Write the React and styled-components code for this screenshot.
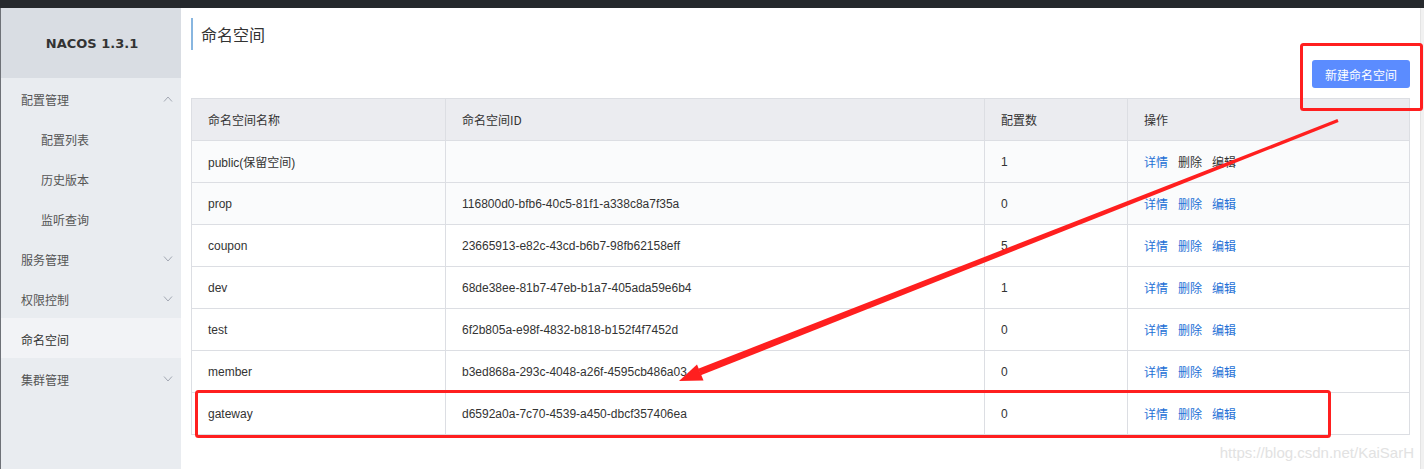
import React from 'react';
import styled, { createGlobalStyle } from 'styled-components';

const GlobalStyle = createGlobalStyle`
  html, body {
    margin: 0;
    padding: 0;
    background: #fff;
    font-family: "Liberation Sans", "Noto Sans CJK SC", sans-serif;
    color: #333;
  }
`;

const namespaces = [
  { name: 'public(保留空间)', id: '', count: 1, reserved: true },
  { name: 'prop', id: '116800d0-bfb6-40c5-81f1-a338c8a7f35a', count: 0 },
  { name: 'coupon', id: '23665913-e82c-43cd-b6b7-98fb62158eff', count: 5 },
  { name: 'dev', id: '68de38ee-81b7-47eb-b1a7-405ada59e6b4', count: 1 },
  { name: 'test', id: '6f2b805a-e98f-4832-b818-b152f4f7452d', count: 0 },
  { name: 'member', id: 'b3ed868a-293c-4048-a26f-4595cb486a03', count: 0 },
  { name: 'gateway', id: 'd6592a0a-7c70-4539-a450-dbcf357406ea', count: 0 },
];

const menu = [
  { label: '配置管理', arrow: 'up' },
  { label: '配置列表', sub: true },
  { label: '历史版本', sub: true },
  { label: '监听查询', sub: true },
  { label: '服务管理', arrow: 'down' },
  { label: '权限控制', arrow: 'down' },
  { label: '命名空间', active: true },
  { label: '集群管理', arrow: 'down' },
];

function Chevron({ dir }) {
  return (
    <svg width="10" height="6" viewBox="0 0 10 6">
      <polyline
        points={dir === 'up' ? '1,5.5 5,1 9,5.5' : '1,0.5 5,5 9,0.5'}
        fill="none"
        stroke="#a3a8b3"
        strokeWidth="1"
      />
    </svg>
  );
}

export default function App() {
  return (
    <Page>
      <GlobalStyle />
      <TopBar />
      <Body>
        <Sidebar>
          <Brand>NACOS 1.3.1</Brand>
          {menu.map((m) => (
            <MenuItem key={m.label} $sub={m.sub} $active={m.active}>
              <span>{m.label}</span>
              {m.arrow && <Chevron dir={m.arrow} />}
            </MenuItem>
          ))}
        </Sidebar>
        <Main>
          <Title>命名空间</Title>
          <Toolbar>
            <PrimaryButton>新建命名空间</PrimaryButton>
          </Toolbar>
          <Table>
            <colgroup>
              <col style={{ width: 254 }} />
              <col style={{ width: 539 }} />
              <col style={{ width: 143 }} />
              <col style={{ width: 282 }} />
            </colgroup>
            <thead>
              <tr>
                <Th>命名空间名称</Th>
                <Th>命名空间ID</Th>
                <Th>配置数</Th>
                <Th>操作</Th>
              </tr>
            </thead>
            <tbody>
              {namespaces.map((ns, i) => (
                <Row key={ns.name} $tinted={i < 2}>
                  <Td>{ns.name}</Td>
                  <Td>{ns.id}</Td>
                  <Td>{ns.count}</Td>
                  <Td>
                    <Actions>
                      <ActionLink>详情</ActionLink>
                      <ActionLink $disabled={ns.reserved}>删除</ActionLink>
                      <ActionLink $disabled={ns.reserved}>编辑</ActionLink>
                    </Actions>
                  </Td>
                </Row>
              ))}
            </tbody>
          </Table>
        </Main>
        <ScrollStrip />
      </Body>

      <Annotations width="1424" height="469" viewBox="0 0 1424 469">
        <rect x="1301.5" y="44.5" width="120" height="65" rx="2" fill="none" stroke="#ff1f1f" strokeWidth="3" />
        <rect x="196.5" y="391.5" width="1133" height="45" rx="2" fill="none" stroke="#ff1f1f" strokeWidth="3" />
        <polygon points="1337.4,119.1 1338.6,121.9 700.8,375.3 698.2,368.7" fill="#ff1f1f" />
        <polygon points="679,381 697,364.5 703.5,380.5" fill="#ff1f1f" />
      </Annotations>
      <Watermark>https://blog.csdn.net/KaiSarH</Watermark>
    </Page>
  );
}

const Page = styled.div`
  position: relative;
  width: 1424px;
  height: 469px;
  overflow: hidden;
`;

const TopBar = styled.div`
  height: 8px;
  background: #25282c;
`;

const Body = styled.div`
  display: flex;
  height: 461px;
`;

const Sidebar = styled.nav`
  width: 180px;
  flex-shrink: 0;
  background: #e9ecf0;
  border-left: 1px solid #6e7177;
`;

const Brand = styled.div`
  height: 70px;
  display: flex;
  align-items: center;
  justify-content: center;
  background: #d9dde3;
  font-family: "DejaVu Sans", "Liberation Sans", sans-serif;
  font-weight: bold;
  font-size: 13px;
  color: #333;
  padding-left: 2px;
`;

const MenuItem = styled.div`
  height: 40px;
  display: flex;
  align-items: center;
  justify-content: space-between;
  padding: 2px 8px 0 ${(p) => (p.$sub ? 40 : 20)}px;
  box-sizing: border-box;
  font-size: 12px;
  color: ${(p) => (p.$active ? '#333' : '#555')};
  background: ${(p) => (p.$active ? '#f2f3f6' : 'transparent')};
  font-family: "Noto Sans CJK SC", sans-serif;
`;

const Main = styled.main`
  flex: 1;
  padding: 10px 10px 0 10px;
  display: flex;
  flex-direction: column;
`;

const Title = styled.h1`
  margin: 0;
  height: 32px;
  display: flex;
  align-items: center;
  border-left: 2px solid #88b6e0;
  padding-left: 8px;
  font-size: 16px;
  font-weight: normal;
  color: #333;
  font-family: "Noto Sans CJK SC", sans-serif;
`;

const Toolbar = styled.div`
  display: flex;
  justify-content: flex-end;
  margin-top: 10px;
`;

const PrimaryButton = styled.button`
  height: 28px;
  width: 98px;
  border: none;
  border-radius: 3px;
  background: #5b8cff;
  color: #fff;
  font-size: 12px;
  font-family: "Noto Sans CJK SC", sans-serif;
  padding: 0;
  cursor: pointer;
`;

const Table = styled.table`
  margin: 10px 0 0 0;
  width: 1218px;
  border-collapse: collapse;
  table-layout: fixed;
  border: 1px solid #dcdee3;
  font-size: 12px;
`;

const Th = styled.th`
  height: 41px;
  padding: 0 16px;
  text-align: left;
  font-weight: normal;
  background: #ebecf0;
  color: #333;
  border: 1px solid #dcdee3;
  font-family: "Noto Sans CJK SC", sans-serif;
`;

const Row = styled.tr`
  background: ${(p) => (p.$tinted ? '#fafbfc' : '#fff')};
`;

const Td = styled.td`
  height: 41px;
  padding: 0 16px;
  border: 1px solid #dcdee3;
  color: #333;
  font-family: "Liberation Sans", "Noto Sans CJK SC", sans-serif;
  white-space: nowrap;
`;

const Actions = styled.div`
  display: flex;
  gap: 10px;
  font-family: "Noto Sans CJK SC", sans-serif;
`;

const ActionLink = styled.a`
  color: ${(p) => (p.$disabled ? '#333' : '#2470d6')};
  cursor: pointer;
`;

const ScrollStrip = styled.div`
  width: 3px;
  flex-shrink: 0;
  background: #f1f1f1;
  border-left: 1px solid #e4e4e4;
`;

const Annotations = styled.svg`
  position: absolute;
  left: 0;
  top: 0;
  pointer-events: none;
`;

const Watermark = styled.div`
  position: absolute;
  right: 10px;
  bottom: 8px;
  font-size: 15px;
  color: #e2e2e2;
  text-shadow: 0 0 1px #fff;
  font-family: "Liberation Sans", sans-serif;
`;
